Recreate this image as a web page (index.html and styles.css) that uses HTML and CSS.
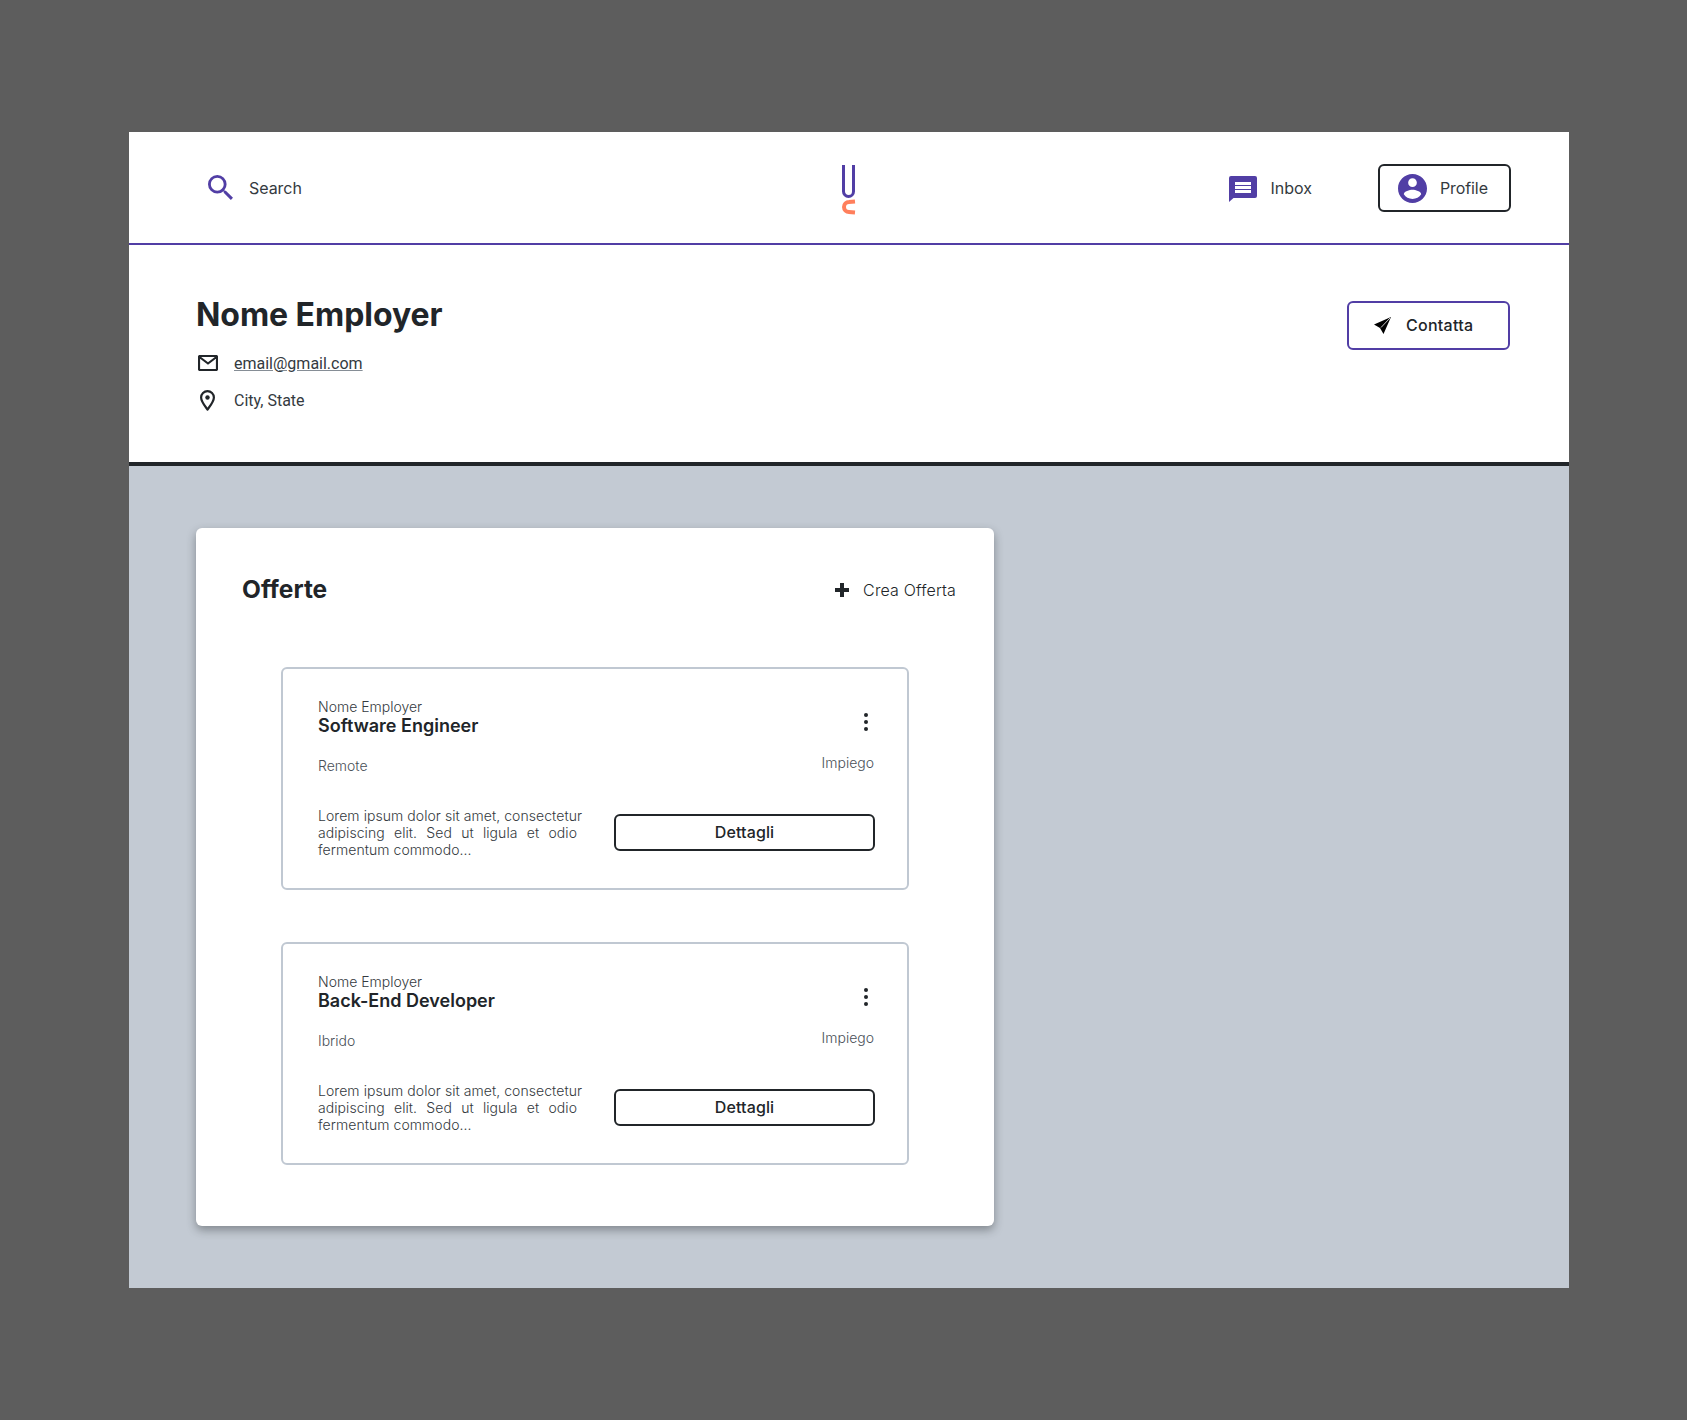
FILE: index.html
```html
<!DOCTYPE html>
<html lang="it">
<head>
<meta charset="utf-8">
<title>Nome Employer</title>
<link rel="stylesheet" href="styles.css">
</head>
<body>
<div class="frame">
  <header class="topbar">
    <div class="nav-search">
      <svg class="ico-search" viewBox="3 3 17.5 17.5"><path d="M15.5 14h-.79l-.28-.27A6.471 6.471 0 0 0 16 9.5 6.5 6.5 0 1 0 9.5 16c1.61 0 3.09-.59 4.23-1.57l.27.28v.79l5 4.99L20.49 19l-4.99-5zm-6 0C7.01 14 5 11.99 5 9.5S7.01 5 9.5 5 14 7.01 14 9.5 11.99 14 9.5 14z"/></svg>
      <span>Search</span>
    </div>
    <svg class="logo" viewBox="0 0 14 50">
      <path class="logo-u" d="M1.500 0v26.500a5 5 0 0 0 10 0V0"/>
      <path class="logo-c" d="M13 36.500 7 37a5 5 0 0 0 0 10l6 .5"/>
    </svg>
    <div class="nav-right">
      <div class="nav-inbox">
        <svg class="ico-chat" viewBox="0 0 28 26"><path fill-rule="evenodd" d="M2 0h24a2 2 0 0 1 2 2v18a2 2 0 0 1-2 2H4.500L0 26V2a2 2 0 0 1 2-2zM6 6v3h16V6zM6 10v3h16v-3zM6 14v3h16v-3z"/></svg>
        <span>Inbox</span>
      </div>
      <div class="btn-profile">
        <svg class="ico-account" viewBox="2 2 20 20"><path d="M12 2C6.480 2 2 6.480 2 12s4.480 10 10 10 10-4.480 10-10S17.520 2 12 2zm0 3c1.660 0 3 1.340 3 3s-1.340 3-3 3-3-1.340-3-3 1.340-3 3-3zm0 14.200c-2.500 0-4.710-1.280-6-3.220.030-1.990 4-3.080 6-3.080 1.990 0 5.970 1.090 6 3.080-1.290 1.940-3.500 3.220-6 3.220z"/></svg>
        <span>Profile</span>
      </div>
    </div>
  </header>

  <section class="employer">
    <div>
      <h1 class="employer-name">Nome Employer</h1>
      <div class="info-row">
        <svg class="ico-mail" viewBox="0 0 20 16"><path d="M2 1h16a1 1 0 0 1 1 1v12a1 1 0 0 1-1 1H2a1 1 0 0 1-1-1V2a1 1 0 0 1 1-1z M1.500 2 10 8.500 18.500 2"/></svg>
        <a class="info-link" href="#">email@gmail.com</a>
      </div>
      <div class="info-row">
        <svg class="ico-pin" viewBox="0 0 15 21"><path class="pin-outline" d="M7.500 19.500C4.500 15.500 1.100 11.500 1.100 7.500a6.400 6.400 0 0 1 12.800 0c0 4-3.400 8-6.400 12z"/><circle cx="7.500" cy="7.500" r="2.200"/></svg>
        <span class="info-text">City, State</span>
      </div>
    </div>
    <button class="btn-contact">
      <svg class="ico-send" viewBox="0 0 17 17"><path d="M0 7.500 17 0 9.500 17 6 11z"/><path class="send-crease" d="M16 1 7 10.500"/></svg>
      <span>Contatta</span>
    </button>
  </section>

  <main class="content">
    <section class="panel">
      <div class="panel-head">
        <h2 class="panel-title">Offerte</h2>
        <div class="create">
          <svg class="ico-plus" viewBox="0 0 14 14"><path d="M5 0h4v5h5v4H9v5H5V9H0V5h5z"/></svg>
          <span>Crea Offerta</span>
        </div>
      </div>
      <div class="offers">
        <article class="offer">
          <div class="offer-top">
            <div>
              <div class="offer-company">Nome Employer</div>
              <div class="offer-title">Software Engineer</div>
            </div>
            <svg class="ico-dots" viewBox="0 0 4 18"><circle cx="2" cy="2" r="2"/><circle cx="2" cy="9" r="2"/><circle cx="2" cy="16" r="2"/></svg>
          </div>
          <div class="offer-meta">
            <span class="offer-place">Remote</span>
            <span class="offer-type">Impiego</span>
          </div>
          <div class="offer-bottom">
            <p class="offer-text"><span class="line-nowrap">Lorem ipsum dolor sit amet, consectetur</span><span class="line-just">adipiscing elit. Sed ut ligula et odio</span><span class="line-nowrap">fermentum commodo...</span></p>
            <button class="btn-details">Dettagli</button>
          </div>
        </article>
        <article class="offer">
          <div class="offer-top">
            <div>
              <div class="offer-company">Nome Employer</div>
              <div class="offer-title">Back-End Developer</div>
            </div>
            <svg class="ico-dots" viewBox="0 0 4 18"><circle cx="2" cy="2" r="2"/><circle cx="2" cy="9" r="2"/><circle cx="2" cy="16" r="2"/></svg>
          </div>
          <div class="offer-meta">
            <span class="offer-place">Ibrido</span>
            <span class="offer-type">Impiego</span>
          </div>
          <div class="offer-bottom">
            <p class="offer-text"><span class="line-nowrap">Lorem ipsum dolor sit amet, consectetur</span><span class="line-just">adipiscing elit. Sed ut ligula et odio</span><span class="line-nowrap">fermentum commodo...</span></p>
            <button class="btn-details">Dettagli</button>
          </div>
        </article>
      </div>
    </section>
  </main>
</div>
</body>
</html>
```
FILE: styles.css
```css
* { box-sizing: border-box; }
html, body { margin: 0; }
body {
  background: #5d5d5d;
  font-family: Inter, "Liberation Sans", sans-serif;
  color: #212529;
  min-height: 1420px;
  padding: 132px 0 0 129px;
}
.frame { width: 1440px; background: #fff; }

.topbar {
  height: 113px;
  border-bottom: 2px solid #513ea5;
  padding: 0 58px 0 79px;
  display: flex;
  align-items: center;
  justify-content: space-between;
  position: relative;
  font-size: 16px;
  line-height: 20px;
  color: #343a40;
}
.nav-search { display: flex; align-items: center; gap: 16px; }
.nav-search span { letter-spacing: -.05px; }
.ico-search { width: 25px; height: 25px; fill: #513ea5; }
.logo { width: 14px; height: 50px; position: absolute; left: 713px; top: 33px; fill: none; }
.logo-u { stroke: #513ea5; stroke-width: 3px; fill: none; }
.logo-c { stroke: #ff7f5c; stroke-width: 4px; fill: none; }
.nav-right { display: flex; align-items: center; gap: 66px; }
.nav-inbox { display: flex; align-items: center; gap: 13px; }
.ico-chat { width: 28px; height: 26px; fill: #513ea5; margin-top: 2px; }
.btn-profile {
  width: 133px;
  height: 48px;
  border: 2px solid #212529;
  border-radius: 6px;
  display: flex;
  align-items: center;
  gap: 13px;
  padding-left: 18px;
  margin-top: 1px;
  letter-spacing: -.1px;
}
.ico-account { width: 29px; height: 29px; fill: #513ea5; }

.employer {
  height: 221px;
  border-bottom: 4px solid #212529;
  padding: 51px 59px 0 67px;
  display: flex;
  justify-content: space-between;
  align-items: flex-start;
}
.employer-name { margin: 0 0 15px; font-size: 32px; line-height: 38px; font-weight: 700; letter-spacing: -.05px; }
.info-row { display: flex; align-items: center; height: 28px; margin-bottom: 9px; font-size: 16px; font-family: Roboto, Inter, sans-serif; }
.ico-mail { width: 20px; height: 16px; margin: 0 16px 0 2px; fill: none; stroke: #212529; stroke-width: 2.200px; stroke-linejoin: round; }
.ico-pin { width: 15px; height: 21px; margin: 0 19px 0 4px; fill: #212529; }
.pin-outline { fill: none; stroke: #212529; stroke-width: 2.200px; stroke-linejoin: round; }
.info-link { color: #343a40; text-decoration: underline; text-decoration-color: #868e96; }
.info-text { color: #343a40; }
.btn-contact {
  width: 163px;
  height: 49px;
  margin-top: 5px;
  background: #fff;
  border: 2px solid #513ea5;
  border-radius: 6px;
  display: flex;
  align-items: center;
  gap: 15px;
  padding: 0 0 1px 25px;
  font: 500 16px Inter, "Liberation Sans", sans-serif;
  letter-spacing: .25px;
  color: #212529;
}
.ico-send { width: 17px; height: 17px; fill: #000; }
.send-crease { stroke: #fff; stroke-width: .8px; fill: none; }

.content { background: #c3cad3; padding: 62px 67px; }
.panel {
  width: 798px;
  height: 698px;
  background: #fff;
  border-radius: 6px;
  box-shadow: 0 4px 10px rgba(33, 37, 41, .4);
  padding: 46px 38px 0 46px;
}
.panel-head { display: flex; justify-content: space-between; align-items: center; height: 30px; }
.panel-title { margin: 0; font-size: 24.500px; line-height: 30px; font-weight: 700; }
.create { display: flex; align-items: center; gap: 14px; font-size: 16px; font-weight: 300; letter-spacing: .15px; margin-top: 2px; }
.ico-plus { width: 14px; height: 14px; fill: #212529; }

.offers { margin: 63px 0 0 39px; display: flex; flex-direction: column; gap: 52px; width: 628px; }
.offer {
  height: 223px;
  border: 2px solid #c0c8d2;
  border-radius: 6px;
  padding: 29px 32px 0 35px;
}
.offer-top { display: flex; justify-content: space-between; align-items: center; padding-right: 7px; }
.offer-company { font-size: 14px; line-height: 17px; font-weight: 300; color: #343a40; }
.offer-title { font-size: 18px; line-height: 20px; font-weight: 600; margin-top: 1px; }
.ico-dots { width: 4px; height: 18px; fill: #212529; margin-top: 10px; }
.offer-meta { display: flex; justify-content: space-between; font-size: 14px; font-weight: 300; color: #495057; line-height: 17px; margin-top: 18px; padding-right: 1px; }
.offer-place { margin-top: 3px; }
.offer-bottom { display: flex; justify-content: space-between; align-items: center; margin-top: 33px; }
.offer-text { margin: 0; width: 259px; font-size: 14px; line-height: 17px; font-weight: 300; color: #343a40; letter-spacing: .06px; }
.line-nowrap { display: block; white-space: nowrap; }
.line-just { display: block; text-align: justify; text-align-last: justify; }
.btn-details {
  width: 261px;
  height: 37px;
  padding-bottom: 2px;
  background: #fff;
  border: 2px solid #212529;
  border-radius: 6px;
  font: 500 16px Inter, "Liberation Sans", sans-serif;
  letter-spacing: .1px;
  color: #212529;
}
```
